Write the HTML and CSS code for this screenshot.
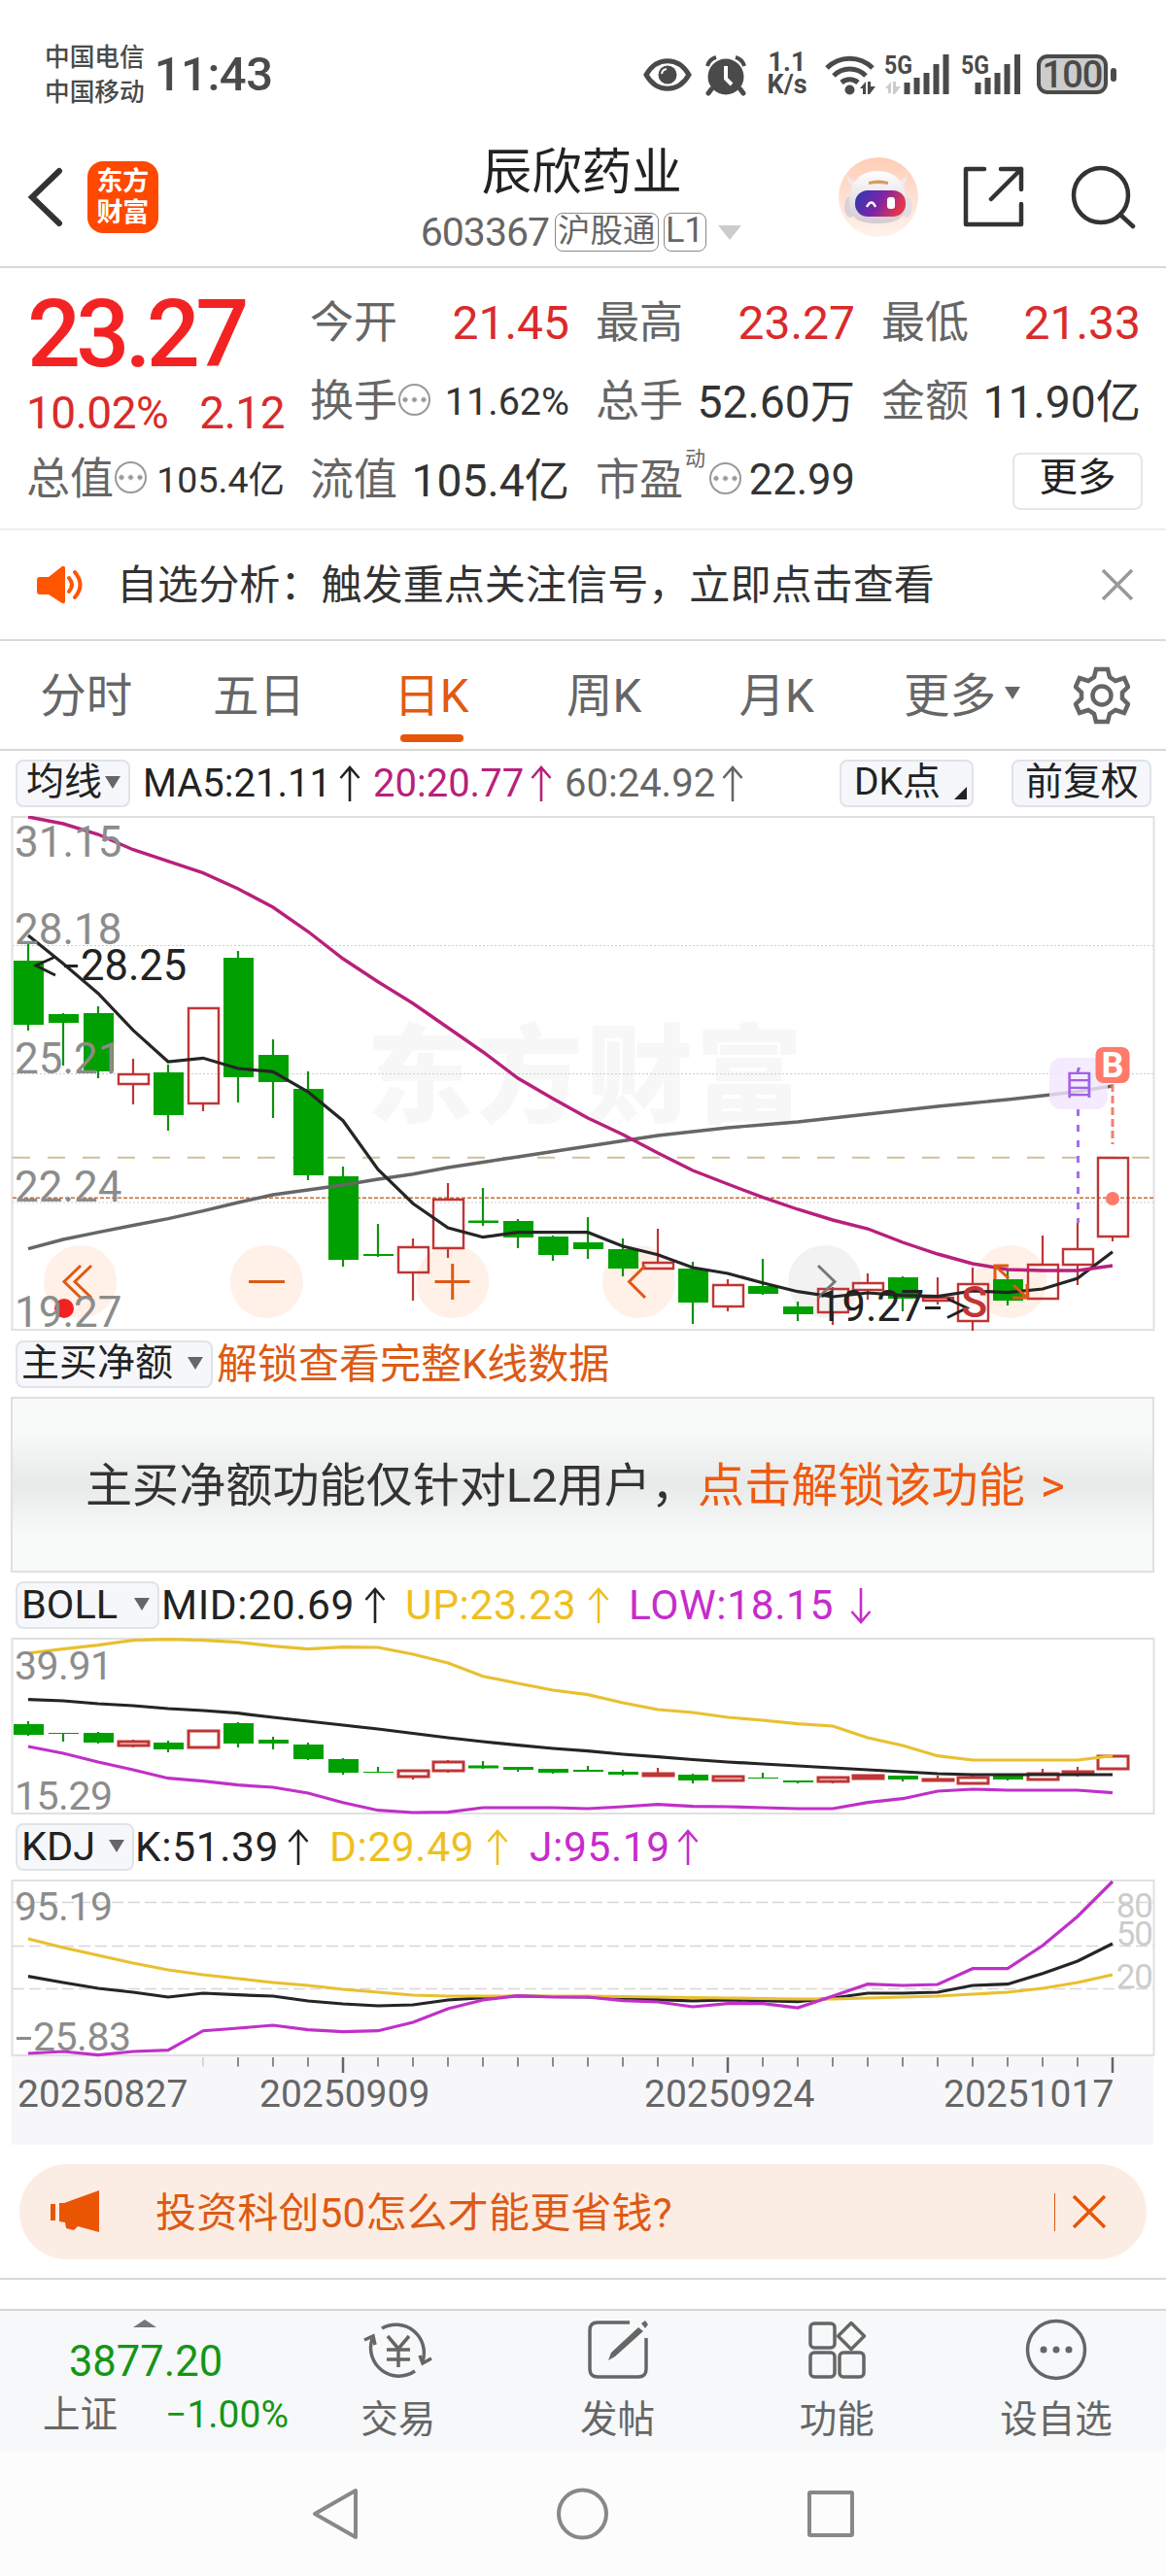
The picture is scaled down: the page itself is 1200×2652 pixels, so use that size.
FILE: index.html
```
<!DOCTYPE html>
<html lang="zh-CN">
    <head>
        <meta charset="UTF-8">
        <title>辰欣药业 603367</title>
        <link rel="stylesheet" href="styles.css">
    </head>
    <body>
        <div class="status">
            <div class="carriers">中国电信<br>中国移动</div>
            <div class="time">11:43</div>
            <div class="statusIcons">
                <svg width="50" height="42" viewBox="0 0 50 42"><path d="M3 21C14 2 36 2 47 21C36 40 14 40 3 21z" fill="none" stroke="#4a4a4a" stroke-width="5"/><circle cx="25" cy="21" r="9.5"/><path d="M19 20a6 6 0 0 1 5-5" fill="none" stroke="#fff" stroke-width="2"/></svg>
                <svg class="alarm" width="42" height="42" viewBox="0 0 42 42"><circle cx="21" cy="23" r="18.5"/><path d="M6 36l-3 4M36 36l3 4" stroke="#4a4a4a" stroke-width="5" stroke-linecap="round"/><path d="M2 12a13 13 0 0 1 9-9M40 12a13 13 0 0 0-9-9" fill="none" stroke="#4a4a4a" stroke-width="4"/><path d="M21 12v13l6 6" fill="none" stroke="#fff" stroke-width="4"/></svg>
                <div class="speed">1.1<br>K/s</div>
                <svg class="wifi" width="52" height="42" viewBox="0 0 52 42"><g fill="none" stroke="#4a4a4a" stroke-width="5"><path d="M2 14a33 33 0 0 1 47 0"/><path d="M9 22a23 23 0 0 1 33 0"/><path d="M17 29a13 13 0 0 1 17 0"/></g><circle cx="25.500" cy="36.500" r="5"/><path d="M36 35l6-7v13h-3v-6zM44 28h3v5h5l-6 8h-2z"/></svg>
                <svg class="signal" width="68" height="42" viewBox="0 0 68 42"><text x="0" y="20" class="g5" textLength="29" lengthAdjust="spacingAndGlyphs">5G</text><path d="M1 35l6-7v12h-3v-5zM9 28h3v5h5l-6 8h-2z" fill="#ccc"/><path d="M20.500 29h6v12h-6zM30.500 24h6v17h-6zM40.500 19h6v22h-6zM50.500 10h6v31h-6zM60.500 0h6v41h-6z"/></svg>
                <svg class="signal2" width="62" height="42" viewBox="0 0 62 42"><text x="0" y="20" class="g5" textLength="29" lengthAdjust="spacingAndGlyphs">5G</text><path d="M14.500 29h6v12h-6zM24.500 24h6v17h-6zM34.500 19h6v22h-6zM44.500 10h6v31h-6zM55 0h6v41h-6z"/></svg>
                <div class="battery">100</div>
                <i class="nub"></i>
            </div>
        </div>

        <div class="header">
            <svg class="back" width="38" height="62" viewBox="0 0 38 62"><path d="M33 4L5 31l28 27" fill="none" stroke="#333" stroke-width="6" stroke-linecap="round"/></svg>
            <div class="logo">东方<br>财富</div>
            <div class="titleBox">
                <div class="title">辰欣药业</div>
                <div class="sub"><span class="code">603367</span><span class="tag">沪股通</span><span class="tag tagL">L1</span><i class="down"></i></div>
            </div>
            <svg class="robot" width="84" height="84" viewBox="0 0 84 84">
                <defs>
                    <linearGradient id="peach" x1="0" y1="0" x2="0" y2="1"><stop offset="0" stop-color="#ffcdb6"/><stop offset="1" stop-color="#fff3ed"/></linearGradient>
                    <linearGradient id="face" x1="0" y1="0" x2="1" y2="0.300"><stop offset="0" stop-color="#2b3bb0"/><stop offset="0.550" stop-color="#7a25a8"/><stop offset="1" stop-color="#e0364f"/></linearGradient>
                    <linearGradient id="head" x1="0" y1="0" x2="0" y2="1"><stop offset="0" stop-color="#fff"/><stop offset="1" stop-color="#d3cbd0"/></linearGradient>
                </defs>
                <circle cx="42" cy="42" r="41" fill="url(#peach)"/>
                <path d="M9 18c1 9 5 13 11 15l3-6c-7-1-11-4-14-9zM72 18c-1 9-4 13-9 15l-4-6c6-1 10-4 13-9z" fill="#f0eaec"/>
                <ellipse cx="13" cy="52" rx="6" ry="11" fill="#d8d2d6"/><ellipse cx="71" cy="52" rx="6" ry="11" fill="#e4dfe2"/>
                <path d="M12 47c0-21 12-32 29-32s30 11 30 32c0 16-9 22-30 22s-29-6-29-22z" fill="url(#head)"/>
                <path d="M32 26q10-3 20 0v3q-10-2-20 0z" fill="#dd9a62"/>
                <rect x="18" y="35" width="52" height="27" rx="13" fill="url(#face)"/>
                <path d="M30 52q5-9 9 0" fill="none" stroke="#fff" stroke-width="2.500"/><rect x="51" y="42" width="8" height="12" rx="3" fill="#fff"/>
            </svg>
            <svg class="share" width="66" height="64" viewBox="0 0 66 64"><path d="M24 3H5v57h57V39M41 3h21v21M62 3L31 34" fill="none" stroke="#333" stroke-width="4.500" stroke-linecap="round" stroke-linejoin="round"/></svg>
            <svg class="search" width="68" height="66" viewBox="0 0 68 66"><g fill="none" stroke="#333" stroke-width="4.500" stroke-linecap="round"><circle cx="31" cy="31" r="28"/><path d="M51 51l13 12"/></g></svg>
        </div>

        <div class="quote">
            <div class="main">
                <div class="price">23.27</div>
                <div class="change"><span>10.02%</span><span>2.12</span></div>
                <div class="cell small"><label>总值</label><i class="dots"></i><b>105.4亿</b></div>
            </div>
            <div class="cells">
                <div class="cell"><label>今开</label><b class="red">21.45</b></div>
                <div class="cell"><label>最高</label><b class="red">23.27</b></div>
                <div class="cell"><label>最低</label><b class="red">21.33</b></div>
                <div class="cell small"><label>换手</label><i class="dots"></i><b>11.62%</b></div>
                <div class="cell"><label>总手</label><b>52.60万</b></div>
                <div class="cell"><label>金额</label><b>11.90亿</b></div>
                <div class="cell"><label>流值</label><b>105.4亿</b></div>
                <div class="cell mid"><label>市盈</label><sup>动</sup><i class="dots"></i><b>22.99</b></div>
                <div class="cell"><button class="more">更多</button></div>
            </div>
        </div>

        <div class="notice">
            <svg width="50" height="42" viewBox="0 0 50 42" fill="#ff5500"><path d="M4 13h9L27 2q3-1 3 2v34q0 3-3 2L13 31H4q-3 0-3-3V16q0-3 3-3z"/><path d="M34 14q6 7 0 14M40 8q11 13 0 26" fill="none" stroke="#ff5500" stroke-width="4" stroke-linecap="round"/></svg>
            <span>自选分析：触发重点关注信号，立即点击查看</span>
            <svg class="close" width="34" height="34" viewBox="0 0 34 34"><path d="M2 2l30 30M32 2L2 32" stroke="#999" stroke-width="3.500"/></svg>
        </div>

        <div class="tabs">
            <div class="tab">分时</div>
            <div class="tab">五日</div>
            <div class="tab active">日K</div>
            <div class="tab">周K</div>
            <div class="tab">月K</div>
            <div class="tab tabMore">更多<i class="tri"></i></div>
            <svg class="gear" width="58" height="60" viewBox="0 0 58 60"><g fill="none" stroke="#666" stroke-width="4.500"><path d="M23 3h12l2 8 6 4 9-3 4 9-6 6v6l6 6-4 9-9-3-6 4-2 8H23l-2-8-6-4-9 3-4-9 6-6v-6l-6-6 4-9 9 3 6-4z"/><circle cx="29" cy="30" r="9.500"/></g></svg>
        </div>

        <div class="row rowMa">
            <div class="chip chipMa">均线<i class="tri"></i></div>
            <div class="val w5">MA5:21.11<svg class="arrow"><use href="#up"/></svg></div>
            <div class="val w20 magenta">20:20.77<svg class="arrow"><use href="#up"/></svg></div>
            <div class="val w60 gray">60:24.92<svg class="arrow"><use href="#up"/></svg></div>
            <div class="chip chipDk">DK点<i class="corner"></i></div>
            <div class="chip chipFq">前复权</div>
        </div>

        <svg class="chart" id="kline" width="1200" height="530" viewBox="0 840 1200 530">
            <defs>
                <symbol id="up" viewBox="0 0 22 38"><path d="M11 37V3M1.500 13L11 2l9.500 11" fill="none" stroke="currentColor" stroke-width="2.600"/></symbol>
            </defs>
            <text x="377" y="1147" class="watermark">东方财富</text>
            <g class="grid"><path d="M13 973.500H1187M13 1105.500H1187M13 1238H1187"/></g>
            <path class="frame" d="M12.500 841H1187.500V1369H12.500z"/>
            <path d="M13 1191.700H1187" stroke="#cfc09c" stroke-width="2" stroke-dasharray="18 18"/>
            <path d="M13 1233.300H1187" stroke="#c0703c" stroke-width="1.500" stroke-dasharray="4 2"/>
            <g class="knobs">
                <circle cx="82.700" cy="1319.500" r="37.500"/><circle cx="274.400" cy="1319.500" r="37.500"/><circle cx="465.700" cy="1319.500" r="37.500"/>
                <circle cx="657.400" cy="1319.500" r="37.500"/><circle class="off" cx="848.600" cy="1319.500" r="37.500"/><circle cx="1040" cy="1319.500" r="37.500"/>
            </g>
            <g class="candles"></g>
            <g class="lines"></g>
            <g class="axis">
                <text x="15" y="882">31.15</text>
                <text x="15" y="972">28.18</text>
                <text x="15" y="1105">25.21</text>
                <text x="15" y="1237">22.24</text>
            </g>
            <g class="knobIcons">
                <path d="M83 1303l-17 16.500 17 16.500M94 1303l-17 16.500 17 16.500M256 1319.500h37M447.500 1319.500h36M465.700 1301v37M664 1303l-16.500 16.500 16.500 16.500"/>
                <path class="off" d="M842 1303l17 16.500-17 16.500"/>
                <path d="M1024 1317v-14h14M1024 1303l14 13M1042 1336h15v-14M1057 1336l-14-13"/>
            </g>
            <circle cx="66" cy="1347" r="10" fill="#f32121"/>
            <g class="axis"><text x="15" y="1365.500">19.27</text></g>
            <g class="mark">
                <path d="M57 985l-20 9 20 10M66 994.500h14M952 1346.500h16M975 1337l20 9.500-20 10"/>
                <text x="83" y="1008.500">28.25</text>
                <text x="842" y="1360">19.27</text>
            </g>
            <text x="989" y="1356" class="sell">S</text>
            <rect x="1080" y="1089" width="60" height="53" rx="12" fill="#f1e6ff" fill-opacity="0.800"/>
            <text x="1094" y="1127" class="self">自</text>
            <path d="M1109.500 1142V1259" stroke="#a56cf0" stroke-width="3" stroke-dasharray="7 9"/>
            <rect x="1127.500" y="1078" width="35" height="37" rx="8" fill="#ff7a6a"/>
            <text x="1145" y="1109" class="buy">B</text>
            <path d="M1145 1116V1178" stroke="#f08070" stroke-width="3" stroke-dasharray="8 4"/>
            <circle cx="1145" cy="1234" r="7" fill="#ff7a6a"/>
        </svg>

        <div class="row rowBuy">
            <div class="chip chipBuy">主买净额<i class="tri"></i></div>
            <div class="unlock">解锁查看完整K线数据</div>
        </div>
        <div class="banner"><span>主买净额功能仅针对L2用户，</span><span class="orange">点击解锁该功能 <i>&gt;</i></span></div>

        <div class="row">
            <div class="chip chipBoll">BOLL<i class="tri"></i></div>
            <div class="val wMid">MID:20.69<svg class="arrow"><use href="#up"/></svg></div>
            <div class="val wUp yellow">UP:23.23<svg class="arrow"><use href="#up"/></svg></div>
            <div class="val wLow purple">LOW:18.15<svg class="arrow flip"><use href="#up"/></svg></div>
        </div>
        <svg class="chart" id="boll" width="1200" height="182" viewBox="0 1686 1200 182">
            <path class="frame" d="M12.500 1687H1187.500V1867H12.500z"/>
            <g class="candles"></g>
            <g class="lines"></g>
            <g class="axis sm"><text x="15" y="1728.500">39.91</text><text x="15" y="1862.500">15.29</text></g>
        </svg>

        <div class="row">
            <div class="chip chipKdj">KDJ<i class="tri"></i></div>
            <div class="val wK">K:51.39<svg class="arrow"><use href="#up"/></svg></div>
            <div class="val wD yellow">D:29.49<svg class="arrow"><use href="#up"/></svg></div>
            <div class="val wJ purple">J:95.19<svg class="arrow"><use href="#up"/></svg></div>
        </div>
        <svg class="chart" id="kdj" width="1200" height="273" viewBox="0 1935 1200 273">
            <rect x="12" y="2117" width="1175" height="91" fill="#f7f7fa"/>
            <path class="frame" d="M12.500 1936H1187.500V2116H12.500z"/>
            <path d="M13 1958.500H1187M13 2003.500H1187M13 2047.500H1187" stroke="#d6d6d6" stroke-width="1.500" stroke-dasharray="12 5"/>
            <g class="axis sm"><text x="15" y="1977">95.19</text><path d="M17 2098.500h15" stroke="#8c8c8c" stroke-width="3"/><text x="34" y="2111">25.83</text></g>
            <g class="level"><text x="1186" y="1974">80</text><text x="1186" y="2002.500">50</text><text x="1186" y="2046.500">20</text></g>
            <g class="lines"></g>
            <g class="ticks"></g>
            <g class="dates"><text x="18" y="2168.500">20250827</text><text x="267" y="2168.500">20250909</text><text x="663" y="2168.500">20250924</text><text x="971" y="2168.500">20251017</text></g>
        </svg>

        <div class="promo">
            <svg width="52" height="44" viewBox="0 0 52 44" fill="#ea5504"><path d="M0 14h5v17H0zM9 13h5L50 0v43l-22-6-4 4-8-2-1-6-6-1z"/></svg>
            <span>投资科创50怎么才能更省钱?</span>
            <i class="bar"></i>
            <svg class="promoClose" width="36" height="36" viewBox="0 0 36 36"><path d="M2 2l32 32M34 2L2 34" stroke="#ea5504" stroke-width="3.500"/></svg>
        </div>
        <div class="strip"></div>

        <div class="bottom">
            <div class="index">
                <i class="upTri"></i>
                <div class="point">3877.20</div>
                <div class="pct"><span>上证</span><b>−1.00%</b></div>
            </div>
            <div class="nav">
                <svg width="72" height="64" viewBox="0 0 72 64"><g fill="none" stroke="#666" stroke-width="3.500"><path d="M19 10A29 29 0 0 1 61 44M53 54A29 29 0 0 1 9 21"/><path d="M1 22l9-4 2 9M70 41l-9 5-3-8M25 18l11 13 11-13M24 32h24M24 42h24M36 31v19"/></g></svg>
                交易
            </div>
            <div class="nav">
                <svg width="64" height="64" viewBox="0 0 64 64"><path d="M44 4H11q-8 0-8 8v40q0 8 8 8h42q8 0 8-8V20" fill="none" stroke="#666" stroke-width="3.500"/><path d="M53 9l5 4L29 39l-7 4 3-8zM56 5l4-3 3 4-3 4z" fill="#666"/></svg>
                发帖
            </div>
            <div class="nav">
                <svg width="64" height="64" viewBox="0 0 64 64"><g fill="none" stroke="#666" stroke-width="3.500"><rect x="5" y="5" width="25" height="25" rx="4"/><rect x="5" y="35" width="25" height="25" rx="4"/><rect x="35" y="35" width="25" height="25" rx="4"/><path d="M47 4.500L60.500 18 47 31.500 33.500 18z" stroke-linejoin="round"/></g></svg>
                功能
            </div>
            <div class="nav">
                <svg width="64" height="64" viewBox="0 0 64 64" fill="#666"><circle cx="32" cy="32" r="29.500" fill="none" stroke="#666" stroke-width="3.500"/><circle cx="19" cy="32" r="3.500"/><circle cx="32" cy="32" r="3.500"/><circle cx="45" cy="32" r="3.500"/></svg>
                设自选
            </div>
        </div>
        <div class="system">
            <svg width="560" height="56" viewBox="321 2560 560 56"><g fill="none" stroke="#888" stroke-width="4" stroke-linejoin="round"><path d="M366 2564v48l-42-24z"/><circle cx="599.500" cy="2588" r="24.500"/><rect x="833" y="2566" width="44" height="44" rx="1"/></g></svg>
        </div>

        <script>
            const NS = 'http://www.w3.org/2000/svg';
            const posX = i => 29 + 36 * i;

            // [color, high, top, bottom, low]
            const kline = [
                ['g',972,989,1055,1061], ['g',1043,1044,1053,1097], ['g',1036,1043,1103,1110], ['r',1090,1106,1116,1137],
                ['g',1096,1104,1148,1164], ['r',1038,1038,1136,1144], ['g',979,986,1109,1135], ['g',1070,1086,1114,1151],
                ['g',1103,1121,1210,1215], ['g',1201,1211,1297,1304], ['g',1260,1291,1293,1294], ['r',1275,1284,1310,1339],
                ['r',1218,1235,1285,1295], ['g',1223,1256.5,1259,1262], ['g',1255,1257,1274,1285], ['g',1272,1273,1292,1298],
                ['g',1253,1279,1286,1296], ['g',1275,1286,1306,1314], ['r',1265,1300,1306,1306], ['g',1299,1306,1341,1363],
                ['r',1317,1323,1345,1350], ['g',1296,1324,1332,1333], ['g',1340,1345,1353,1360], ['r',1325,1327,1351,1364],
                ['r',1311,1321,1328,1338], ['g',1314,1315,1337,1350], ['r',1315,1336,1339,1343], ['r',1305,1322,1360,1370],
                ['g',1306,1317,1339,1344], ['r',1272,1302,1337,1337], ['r',1259,1286,1302,1323], ['r',1192,1192,1273,1278]
            ];
            const boll = [
                ['g',1772,1775,1786,1787], ['g',1784,1784,1785,1793], ['g',1783,1784,1794,1795], ['r',1791,1793,1797,1799],
                ['g',1792,1794,1801,1804], ['r',1782,1782,1799,1800], ['g',1773,1774,1795,1799], ['g',1788,1791,1795,1801],
                ['g',1794,1796,1811,1812], ['g',1810,1811,1825,1827], ['g',1819,1824,1825,1825], ['r',1822,1823,1829,1832],
                ['r',1812,1814,1823,1825], ['g',1813,1817.5,1820.5,1821], ['g',1819,1819,1822,1824], ['g',1821,1821,1825,1826],
                ['g',1818,1822,1824,1824], ['g',1822,1824,1827,1828], ['r',1820,1826,1828,1828], ['g',1826,1827,1833,1836],
                ['r',1828,1829,1833,1834], ['g',1825,1830,1831,1831], ['g',1833,1833,1835,1836], ['r',1829,1830,1834,1836],
                ['r',1827,1828,1831,1832], ['g',1828,1828,1832,1834], ['r',1828,1832,1833,1834], ['r',1827,1830,1836,1837],
                ['g',1826,1828,1832,1833], ['r',1821,1826,1832,1833], ['r',1819,1824,1826,1829], ['r',1808,1808,1821,1821]
            ];

            const ma60 = [1285.7,1276,1268.7,1261.5,1254.7,1246.7,1238,1230,1225,1220,1214,1208.7,1202,1196.5,1191,1185.5,1180,1174.5,1169,1165,1161,1158,1155,1151,1147,1143,1139,1135.5,1132,1128,1123.7,1118];
            const ma20 = [841,848,859,874.7,886.7,898.7,915,934,959,987,1010.7,1033,1058,1083,1110,1131,1151,1168,1187,1205,1219,1232.7,1245,1256,1265,1279,1291,1301,1307,1308,1308,1303];
            const ma5 = [963,992,1022.7,1060.7,1093,1089.3,1100,1103.3,1124,1153.7,1204,1239,1264,1273.7,1268.7,1268.7,1268.7,1283,1291.7,1305,1311,1320.7,1329.7,1335,1331,1333.7,1334.7,1329,1330.7,1327,1316,1288.7];
            const up = [1702,1697.7,1693.7,1688.7,1687.7,1688.7,1690.7,1694.7,1697.7,1695.7,1696,1703,1712,1725.7,1733,1740,1744.7,1753,1760,1763,1768,1771,1774.7,1777,1789,1797,1807.7,1812,1812,1812,1812,1807.7];
            const mid = [1749.7,1751,1754,1756,1759,1761,1763.7,1768,1772,1776,1780,1784.5,1789,1793,1796.7,1800,1802.7,1806,1808.7,1811.5,1814,1816,1818,1820,1822,1824,1826,1827,1827,1827,1827,1827];
            const low = [1798,1805,1814,1822,1830.7,1833.7,1837.7,1840,1846,1855.7,1863.7,1866,1865.7,1861,1861,1861,1862,1860,1857.7,1859.7,1860,1861,1862,1862,1855.7,1851.7,1844,1842,1843,1843,1843,1845.7];
            const k = [2034.7,2041,2047,2051,2056,2052,2053.7,2055,2060,2063,2065,2064,2059,2056.7,2055,2055.5,2056,2058,2058.7,2060,2059,2059.7,2060.7,2057,2052,2052,2051,2044,2042.7,2031.7,2019,2001];
            const d = [1996,2005,2013,2021,2028,2033,2037,2041,2044,2048,2051,2054,2055,2055,2055,2055,2055,2055.5,2056,2056.5,2057,2057.5,2058,2058,2057,2056,2055,2053,2051,2047,2041,2033];
            const j = [2114,2112,2115.7,2112,2110.7,2090.7,2088,2085,2089.7,2091.7,2090.7,2082,2068,2059,2054.7,2056,2056,2059.7,2061,2066,2062.7,2062.7,2067,2055,2042.7,2044,2043,2026.7,2026.7,2003,1973,1937];

            function addPath(parent, attrs) {
                const p = document.createElementNS(NS, 'path');
                for (const name in attrs) {
                    p.setAttribute(name, attrs[name]);
                }
                parent.appendChild(p);
            }

            function drawCandles(id, data, border) {
                const g = document.querySelector('#' + id + ' .candles');
                data.forEach((c, i) => {
                    const x = posX(i);
                    const h = c[3] - c[2];
                    if (c[0] == 'g') {
                        addPath(g, {d: `M${x} ${c[1]}V${c[4]}`, stroke: '#109010', 'stroke-width': 2.2});
                        addPath(g, {d: `M${x - 15} ${c[2]}h31v${h}h-31z`, fill: '#00a000'});
                    } else {
                        addPath(g, {d: `M${x} ${c[1]}V${c[2]}M${x} ${c[3]}V${c[4]}`, stroke: '#c03535', 'stroke-width': 2.2});
                        addPath(g, {d: `M${x - 15} ${c[2]}h31v${h}h-31z`, fill: 'none', stroke: '#c03535', 'stroke-width': border});
                    }
                });
            }

            function drawLine(id, data, color, width) {
                const pts = data.map((y, i) => posX(i) + ' ' + y);
                addPath(document.querySelector('#' + id + ' .lines'), {d: 'M' + pts.join('L'), fill: 'none', stroke: color, 'stroke-width': width});
            }

            drawCandles('kline', kline, 2.4);
            drawLine('kline', ma60, '#666', 3.4);
            drawLine('kline', ma5, '#252525', 3.2);
            drawLine('kline', ma20, '#b8207c', 3.4);
            drawCandles('boll', boll, 3);
            drawLine('boll', up, '#e8c030', 3.2);
            drawLine('boll', mid, '#252525', 3.2);
            drawLine('boll', low, '#c030c8', 3.2);
            drawLine('kdj', k, '#252525', 3.2);
            drawLine('kdj', d, '#e8c030', 3.2);
            drawLine('kdj', j, '#c030c8', 3.2);

            const ticks = document.querySelector('#kdj .ticks');
            for (let i = 5; i < 32; i++) {
                const big = [9, 20, 31].includes(i);
                addPath(ticks, {d: `M${posX(i)} 2118V${big ? 2134 : 2127.5}`, stroke: i == 5 ? '#ccc' : '#666', 'stroke-width': big ? 2.5 : 1.5});
            }
        </script>
    </body>
</html>
```
FILE: styles.css
```
* {
    box-sizing: border-box;
}
body {
    margin: 0;
    width: 1200px;
    background: #fff;
    color: #222;
    font-family: Roboto, "Noto Sans CJK SC", sans-serif;
}
svg {
    display: block;
    flex: none;
}
i {
    font-style: normal;
}
b {
    font-weight: 400;
}

/* status bar */
.status {
    height: 132px;
    padding: 40px 51px 0 46px;
    display: flex;
    align-items: flex-start;
    color: #4a4a4a;
}
.carriers {
    padding-top: 1px;
    font-size: 25.7px;
    line-height: 36px;
    font-weight: 500;
}
.time {
    margin: 9px 0 0 10px;
    font-size: 49px;
    line-height: 56px;
    font-weight: 500;
    letter-spacing: -0.5px;
}
.statusIcons {
    margin: 16px 0 0 auto;
    display: flex;
    fill: #4a4a4a;
}
.statusIcons svg {
    overflow: visible;
}
.alarm {
    margin-left: 14px;
}
.speed {
    width: 42px;
    margin: -3px 0 0 21px;
    font-size: 27px;
    line-height: 23px;
    font-weight: 700;
    text-align: center;
}
.wifi {
    margin-left: 18px;
}
.signal {
    margin-left: 9px;
}
.signal2 {
    margin-left: 11px;
}
.g5 {
    font-size: 26px;
    font-weight: 700;
}
.battery {
    width: 73px;
    height: 41px;
    margin-left: 16px;
    border: 4px solid #4a4a4a;
    border-radius: 11px;
    background: #ccc;
    font-size: 38px;
    line-height: 34px;
    font-weight: 500;
    text-align: center;
    letter-spacing: -1px;
}
.nub {
    width: 6px;
    height: 14px;
    margin: 14px 0 0 3px;
    border-radius: 3px;
    background: #4a4a4a;
}

/* header */
.header {
    height: 144px;
    padding: 0 30px 0 28px;
    display: flex;
    align-items: flex-start;
    border-bottom: 2px solid #d9d9d9;
}
.back {
    margin-top: 40px;
}
.logo {
    width: 74px;
    height: 74px;
    margin: 34px 0 0 24px;
    padding-top: 5px;
    border-radius: 16px;
    background: #ff4800;
    color: #fff;
    font-size: 27px;
    line-height: 32px;
    font-weight: 700;
    text-align: center;
}
.titleBox {
    width: 340px;
    margin: 12px 0 0 270px;
}
.title {
    width: 332px;
    font-size: 51.5px;
    line-height: 68px;
    text-align: center;
}
.sub {
    margin-top: 7px;
    display: flex;
    align-items: center;
    height: 40px;
    color: #666;
}
.code {
    width: 138px;
    font-size: 41px;
    letter-spacing: -1px;
}
.tag {
    height: 40px;
    width: 107px;
    border: 1.5px solid #888;
    border-radius: 8px;
    font-size: 33.5px;
    line-height: 35px;
    text-align: center;
}
.tagL {
    width: 44px;
    margin-left: 5px;
    font-size: 36px;
}
.down {
    margin-left: 12px;
    border: 12px solid transparent;
    border-top: 15px solid #ccc;
    border-bottom: 0;
}
.robot {
    margin: 29px 0 0 95px;
}
.share {
    margin: 39px 0 0 43px;
}
.search {
    margin: 38px 0 0 47px;
}

/* quote */
.quote {
    height: 270px;
    padding: 27px 26px 0 27px;
    display: flex;
    border-bottom: 2px solid #eee;
}
.main {
    width: 267px;
}
.price {
    height: 83px;
    padding-left: 1px;
    font-size: 97px;
    line-height: 83px;
    font-weight: 500;
    letter-spacing: -4.8px;
    color: #f32323;
}
.change {
    height: 60px;
    margin-top: 9px;
    display: flex;
    justify-content: space-between;
    font-size: 46px;
    line-height: 60px;
    letter-spacing: -0.5px;
    color: #d92b2b;
}
.main .cell {
    margin-top: 9px;
}
.cells {
    margin-left: 26px;
    display: grid;
    grid-template-columns: 267px 267px 267px;
    column-gap: 27px;
    grid-auto-rows: 81px;
    width: 855px;
}
.cell {
    display: flex;
    height: 60px;
    align-items: center;
    font-size: 46.3px;
    line-height: 60px;
    color: #333;
    white-space: nowrap;
}
.cell label {
    font-size: 45px;
    color: #666;
}
.cell b {
    margin-left: auto;
}
.cell .red {
    color: #d92b2b;
    font-size: 48px;
}
.small b {
    font-size: 39.5px;
}
.main .small b {
    font-size: 37.5px;
}
.mid b {
    font-size: 43.5px;
}
.cell sup {
    font-size: 21px;
    line-height: 24px;
    margin: -46px 0 0 2px;
    color: #666;
}
.mid .dots {
    margin-left: 4px;
}
.dots {
    width: 33px;
    height: 33px;
    margin: -6px 0 0 1px;
    border: 2.5px solid #999;
    border-radius: 50%;
    background: radial-gradient(circle, #999 2.3px, transparent 2.8px) center / 9.5px 28px;
    background-clip: content-box;
    background-origin: content-box;
}
.more {
    width: 134px;
    height: 59px;
    margin-left: auto;
    margin-right: -2px;
    padding: 0 0 6px;
    border: 2px solid #e6e6e6;
    border-radius: 8px;
    background: #fff;
    color: #222;
    font-family: inherit;
    font-size: 39.5px;
    line-height: 1;
}

/* notice */
.notice {
    height: 114px;
    padding: 0 33px 0 37px;
    display: flex;
    align-items: center;
    border-bottom: 2px solid #d9d9d9;
    font-size: 42.1px;
    color: #333;
}
.notice span {
    margin-left: 33px;
    padding-bottom: 7px;
}
.close {
    margin-left: auto;
}

/* period tabs */
.tabs {
    height: 113px;
    display: flex;
    border-bottom: 2px solid #d9d9d9;
    color: #666;
    font-size: 47.5px;
    line-height: 114px;
}
.tab {
    width: 177.6px;
    text-align: center;
    position: relative;
}
.tabMore {
    width: 204px;
}
.tabMore .tri {
    display: inline-block;
    margin: 0 0 13px 9px;
}
.active {
    color: #e25a12;
}
.active::after {
    content: "";
    position: absolute;
    left: 57px;
    bottom: 7px;
    width: 65px;
    height: 8px;
    border-radius: 4px;
    background: #e6550a;
}
.gear {
    margin: 26px 0 0 13px;
}
.tri {
    border: 8px solid transparent;
    border-top: 13px solid #666;
    border-bottom: 0;
}

/* indicator rows */
.row {
    height: 67px;
    padding-left: 16px;
    display: flex;
    align-items: center;
}
.rowBuy {
    height: 68px;
}
.chip {
    height: 49px;
    padding: 0 8px 2px 4px;
    display: flex;
    align-items: center;
    justify-content: space-between;
    border: 2px solid #e0e3e8;
    border-radius: 8px;
    background: #f6f7fa;
    font-size: 39px;
    line-height: 1;
    white-space: nowrap;
}
.chipMa {
    width: 118px;
    padding: 0 8px 2px 9px;
    margin-right: 13px;
}
.chipDk {
    width: 138px;
    margin-left: 99px;
    padding-left: 13px;
    padding-right: 5px;
}
.chipFq {
    width: 144px;
    margin-left: 39px;
    padding: 0 0 2px 12px;
}
.corner {
    align-self: flex-end;
    margin-bottom: 4px;
    border-left: 13px solid transparent;
    border-bottom: 13px solid #222;
}
.chipBuy {
    width: 203px;
}
.chipBoll {
    width: 148px;
    font-size: 41.5px;
}
.chipKdj {
    width: 122px;
    font-size: 41.5px;
}
.val {
    display: flex;
    justify-content: space-between;
    align-items: center;
    font-size: 42.5px;
    letter-spacing: 0.6px;
    white-space: nowrap;
}
.rowMa .val {
    font-size: 40px;
    letter-spacing: 0;
}
.arrow {
    width: 22px;
    height: 38px;
}
.flip {
    transform: scaleY(-1);
}
.w5 {
    width: 224px;
}
.w20, .w60 {
    width: 184px;
    margin-left: 13px;
}
.wMid {
    width: 231px;
    margin-left: 2px;
}
.wUp {
    width: 210px;
    margin-left: 20px;
}
.wLow {
    width: 250px;
    margin-left: 20px;
}
.wK {
    width: 179px;
    margin-left: 1px;
}
.wD {
    width: 184px;
    margin-left: 21px;
}
.wJ {
    width: 174px;
    margin-left: 22px;
}
.magenta {
    color: #b8207c;
}
.gray {
    color: #666;
}
.yellow {
    color: #eebf20;
}
.purple {
    color: #c62ccc;
}
.unlock {
    margin-left: 4px;
    padding-bottom: 7px;
    font-size: 42px;
    color: #dd5a14;
}

/* charts */
.frame {
    fill: none;
    stroke: #e0e0e0;
    stroke-width: 2;
}
.grid {
    stroke: #ccc;
    stroke-width: 1;
    stroke-dasharray: 2 2;
}
.watermark {
    font-size: 110px;
    font-weight: 900;
    letter-spacing: 3px;
    fill: #f7f7f7;
}
.axis {
    font-size: 44px;
    fill: #8c8c8c;
}
.sm {
    font-size: 41px;
    letter-spacing: -0.5px;
}
.mark {
    font-size: 43.5px;
    fill: #222;
}
.mark path {
    fill: none;
    stroke: #222;
    stroke-width: 3;
}
.knobs {
    fill: #fff0e8;
}
.knobs .off {
    fill: #f2f2f2;
}
.knobIcons {
    fill: none;
    stroke: #dd5a14;
    stroke-width: 3;
}
.knobIcons .off {
    stroke: #777;
}
.sell {
    font-size: 45px;
    font-weight: 500;
    fill: #c03535;
}
.self {
    font-size: 33px;
    fill: #a060e8;
}
.buy {
    font-size: 36px;
    font-weight: 700;
    fill: #fff;
    text-anchor: middle;
}
.level {
    font-size: 35px;
    letter-spacing: -1px;
    fill: #ccc;
    text-anchor: end;
}
.dates {
    font-size: 39px;
    fill: #666;
}

.banner {
    height: 181px;
    width: 1177px;
    margin: 0 0 0 11px;
    padding: 0 0 8px 75px;
    display: flex;
    align-items: center;
    border: 2px solid #e0e0e0;
    background: linear-gradient(#f8faf9 20%, #e9ebea 47%, #e9ebea 51%, #f8faf9 80%);
    color: #333;
    font-size: 48.1px;
    white-space: nowrap;
}
.banner .orange {
    color: #f0590f;
}
.banner i {
    margin-left: 4px;
}

/* promo */
.promo {
    height: 98px;
    margin: 20px 20px 19px;
    padding: 0 41px 0 32px;
    display: flex;
    align-items: center;
    border-radius: 49px;
    background: #fcede4;
    color: #dd5a14;
    font-size: 42px;
}
.promo span {
    margin-left: 56px;
    padding-bottom: 5px;
    letter-spacing: 0.2px;
}
.bar {
    width: 1.5px;
    height: 39px;
    margin-left: auto;
    margin-right: 17px;
    background: #dd5a14;
}
.strip {
    height: 34px;
    border-top: 2px solid #d9d9d9;
    border-bottom: 2px solid #d4d6d8;
}

/* bottom bar */
.bottom {
    height: 145px;
    display: flex;
    background: #f6f8fa;
    color: #666;
}
.index {
    width: 297px;
    padding-top: 9px;
}
.upTri {
    display: block;
    width: 0;
    margin-left: 137px;
    border: 12px solid transparent;
    border-bottom: 8px solid #777;
    border-top: 0;
}
.point {
    margin: 10px 0 0 3px;
    font-size: 43.5px;
    line-height: 52px;
    text-align: center;
    color: #159515;
}
.pct {
    display: flex;
    justify-content: space-between;
    padding-left: 44px;
    font-size: 38.5px;
    line-height: 56px;
}
.pct b {
    font-size: 39px;
    color: #159515;
}
.nav {
    width: 225.700px;
    padding-top: 8px;
    display: flex;
    flex-direction: column;
    align-items: center;
    font-size: 38.5px;
    line-height: 80px;
}
.system {
    height: 128px;
    padding: 36px 0 0 321px;
    background: #fcfcfc;
}
```
